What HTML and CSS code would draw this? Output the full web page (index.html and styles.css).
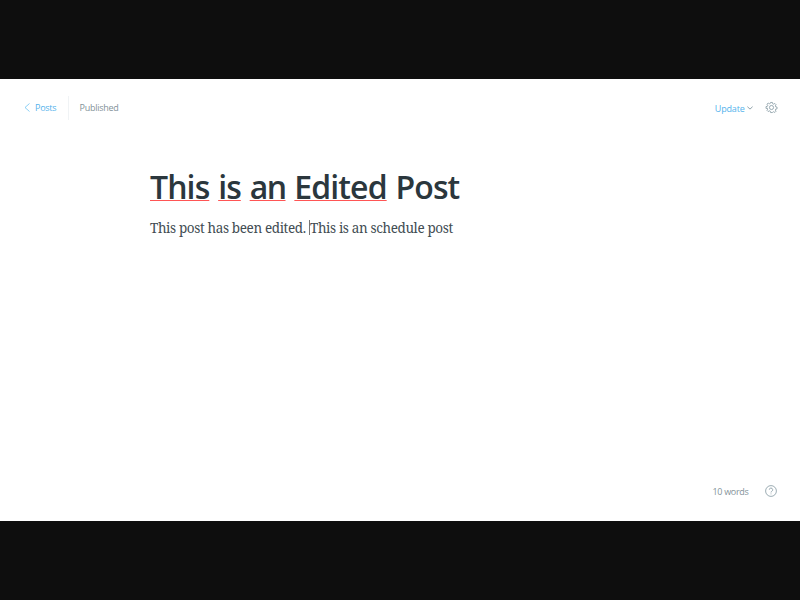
FILE: index.html
```html
<!DOCTYPE html>
<html lang="en"><head><meta charset="utf-8"><title>Editor</title><link rel="stylesheet" href="styles.css"></head>
<body>
<main class="editor">
<header class="topbar">
<a class="back"><svg class="chev" viewBox="0 0 6 9"><path d="M5.500.5 1 4.500l4.500 4"/></svg><span class="posts">Posts</span></a>
<span class="status">Published</span>
<a class="update"><span class="update-text">Update</span><svg class="down" viewBox="0 0 6 4"><path d="M.4.7 3 3.1 5.600.7"/></svg></a>
<svg class="gear" viewBox="0 0 24 24"><circle cx="12" cy="12" r="4.5"/><path d="M10 1h4l.7 3 2 .8 2.6-1.6 2.6 2.6-1.6 2.6.8 2 3 .6v4l-3 .6-.8 2 1.6 2.6-2.6 2.6-2.6-1.6-2 .8L14 23h-4l-.7-3-2-.8-2.6 1.6-2.6-2.6 1.600-2.600-.8-2L0 14v-4l3-.6.8-2L2.200 4.800l2.600-2.600L7.400 3.800l2-.8z"/></svg>
</header>
<article class="content">
<h1 class="title"><span class="err">This</span> <span class="err">is</span> <span class="err narrow">an</span> <span class="err">Edited</span> <span>Post</span></h1>
<p class="text"><span class="first">This post has been edited. </span><i class="caret"></i><span class="second">This is an schedule post</span></p>
</article>
<footer class="foot"><span class="words">10 words</span><svg class="help" viewBox="0 0 12 12"><circle cx="6" cy="6" r="5.4"/><path d="M4.300 4.700a1.700 1.700 0 1 1 2.400 1.600Q6 6.600 6 7.500M6 8.500v.8"/></svg></footer>
</main>
</body></html>
```
FILE: styles.css
```css
*{box-sizing:border-box}
body{margin:0;background:#0e0e0e;font-family:"Open Sans",sans-serif;height:600px;padding-top:79px}
.editor{height:442px;background:#fff;display:flex;flex-direction:column}
svg{fill:none;stroke:#738a94;stroke-width:1}
.topbar{height:57px;display:flex;align-items:center;padding:0 23px 0 24px;font-size:9px;color:#839299}
.back{display:flex;align-items:center;color:#55b3ec;width:45px;height:24px;border-right:1px solid #f0f3f5}
.chev{width:6px;height:9px;margin-right:5px;stroke:#3eb0ef;stroke-width:.6}
.posts{letter-spacing:-.25px}
.status{margin-left:10.5px;letter-spacing:-.25px}
.update{margin-left:auto;display:flex;align-items:center;color:#55b3ec;padding-top:1px}
.update-text{letter-spacing:-.2px}
.down{width:6px;height:4px;margin-left:2px;stroke-width:.8}
.gear{width:11px;height:11px;margin-left:13.5px;stroke-width:1.5;overflow:visible}
.content{flex:1;padding:31px 0 0 150px}
.title{margin:0;font-size:32px;line-height:40px;font-weight:600;color:#2b373d;white-space:nowrap;letter-spacing:-.9px;word-spacing:1.400px}
.narrow{letter-spacing:-1.500px}
.err{text-decoration:underline #f55 1px}
.text{margin:11px 0 0;font:13.5px/20px "Noto Serif","Liberation Serif",serif;letter-spacing:-.37px;color:#424d53;display:flex;white-space:pre}
.first{width:159px}
.caret{width:1px;height:15px;margin-top:2px;background:#777}
.foot{height:60px;display:flex;justify-content:flex-end;padding:0 23.5px 0 24px;align-items:center;font-size:9px;color:#839299}
.words{letter-spacing:-.3px}
.help{width:12px;height:12px;margin-left:16px;stroke-width:.7}
```
